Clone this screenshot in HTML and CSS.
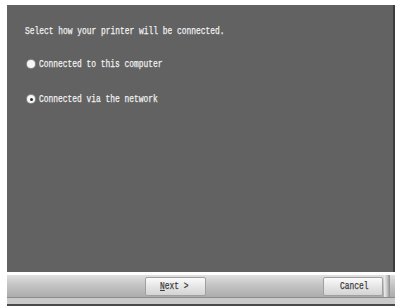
FILE: index.html
```html
<!DOCTYPE html>
<html>
<head>
<meta charset="utf-8">
<link rel="stylesheet" href="styles.css">
</head>
<body>
<div class="window">
  <div class="panel">
    <p class="prompt"><span class="txt">Select how your printer will be connected.</span></p>
    <div class="options">
      <label class="option"><span class="radio"></span><span class="txt">Connected to this computer</span></label>
      <label class="option"><span class="radio checked"></span><span class="txt">Connected via the network</span></label>
    </div>
  </div>
  <div class="footer">
    <div class="footer-inner">
      <button class="btn btn-next"><span class="txt"><u>N</u>ext &gt;</span></button>
      <button class="btn btn-cancel"><span class="txt">Cancel</span></button>
      <span class="bevel"></span>
    </div>
    <div class="footer-strip"></div>
  </div>
</div>
</body>
</html>
```

FILE: styles.css
```css
html, body {
  margin: 0;
  padding: 0;
  background: #ffffff;
}

body {
  width: 398px;
  height: 307px;
  overflow: hidden;
  font-family: "Liberation Mono", "DejaVu Sans Mono", monospace;
}

.window {
  margin: 5px 0 0 7px;
  width: 388px;
}

.panel {
  height: 267px;
  box-sizing: border-box;
  background: #626262;
  border-right: 2px solid #3c3c3c;
  padding: 16px 0 0 18px;
  color: #f2f2f2;
}

.txt {
  display: inline-block;
  font-size: 11px;
  line-height: 12px;
  transform: scaleX(0.72);
  transform-origin: left center;
  white-space: nowrap;
  -webkit-text-stroke: 0.25px currentColor;
}

.prompt {
  margin: 0;
  height: 12px;
}

.options {
  display: flex;
  flex-direction: column;
  gap: 23px;
  margin-top: 25px;
}

.option {
  display: flex;
  align-items: center;
  gap: 4px;
  height: 12px;
  margin-left: 2px;
}

.radio {
  width: 8px;
  height: 8px;
  border-radius: 50%;
  background: #f6f6f6;
  box-shadow: 0 0 0 1px #8a8a8a;
  box-sizing: border-box;
  position: relative;
  flex: none;
}

.radio.checked::after {
  content: "";
  position: absolute;
  left: 2.5px;
  top: 2.5px;
  width: 3px;
  height: 3px;
  border-radius: 50%;
  background: #2a2a2a;
}

.footer {
  height: 34px;
  background: #ffffff;
}

.footer-inner {
  margin-top: 3px;
  height: 22px;
  background: linear-gradient(#e0e0e0 0%, #c4c4c4 45%, #acacac 100%);
  display: flex;
  align-items: center;
  padding-left: 138px;
  box-sizing: border-box;
  position: relative;
}

.btn {
  height: 19px;
  padding: 0;
  border: 1px solid #a0a0a0;
  border-radius: 2px;
  background: linear-gradient(#fafafa, #e2e2e2 60%, #d4d4d4);
  color: #3a3a3a;
  display: flex;
  align-items: center;
  justify-content: flex-start;
  font-family: inherit;
}

.btn-next {
  width: 61px;
  padding-left: 14px;
}

.btn-cancel {
  width: 60px;
  margin-left: 117px;
  padding-left: 16px;
}

.btn .txt {
  color: #3a3a3a;
}

.bevel {
  width: 6px;
  height: 22px;
  margin-left: 1px;
  background: linear-gradient(90deg, #eeeeee, #c8c8c8 50%, #8a8a8a);
}

.footer-strip {
  border-top: 1px solid #8c8c8c;
  background: #cacaca;
  border-bottom: 2px solid #4a4a4a;
  box-sizing: border-box;
  height: 9px;
}
```
